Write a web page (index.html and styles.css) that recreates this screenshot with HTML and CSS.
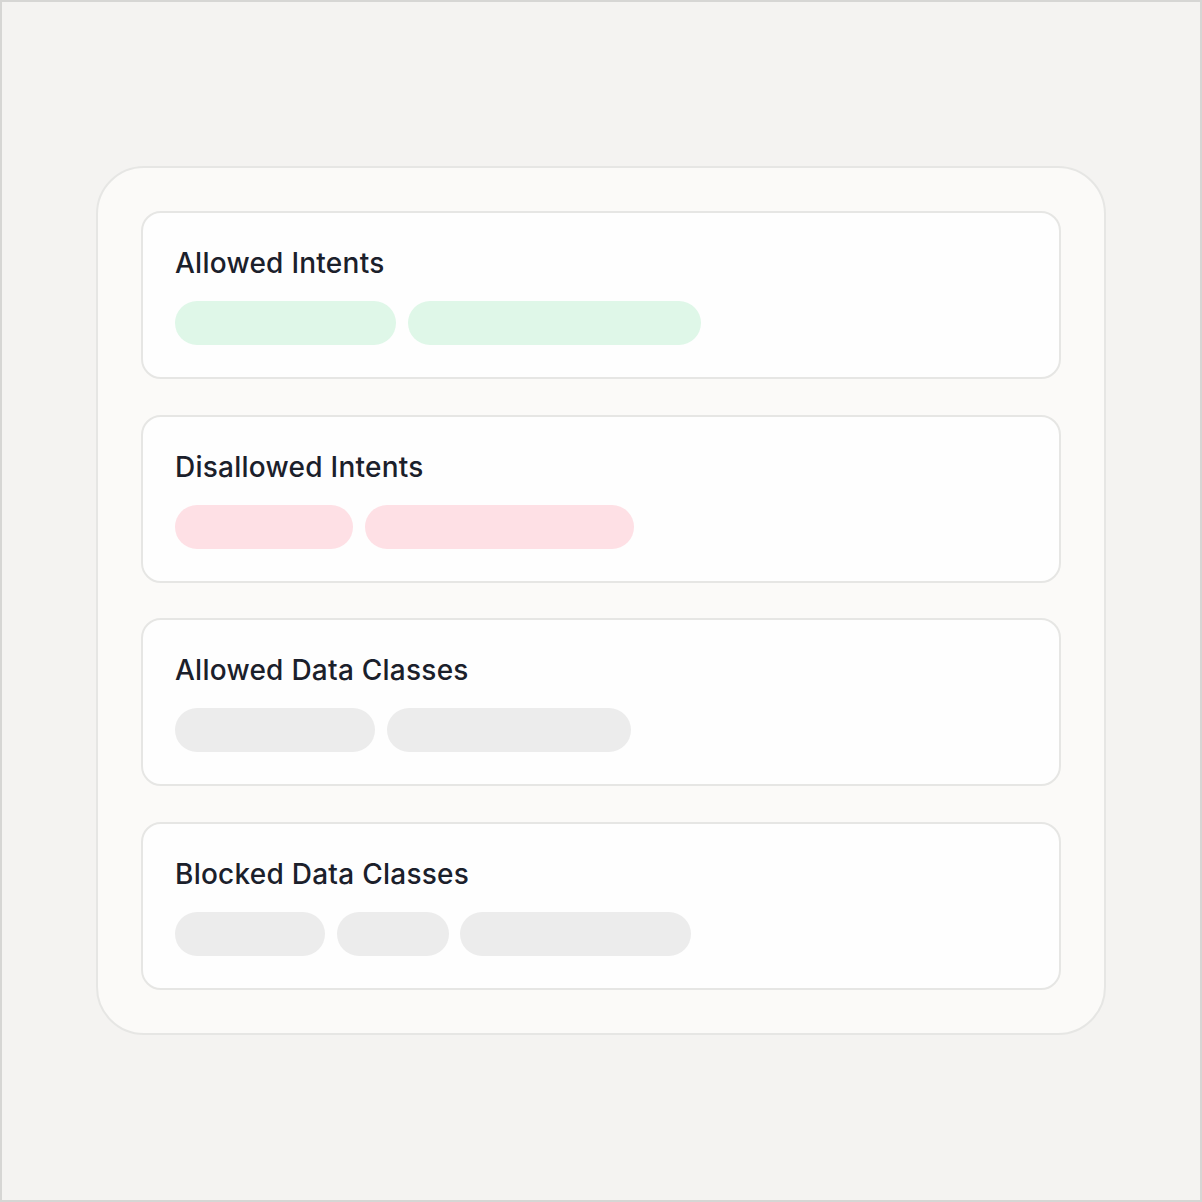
FILE: index.html
```html
<!DOCTYPE html>
<html>
<head>
<meta charset="utf-8">
<link rel="stylesheet" href="styles.css">
</head>
<body>
<div class="frame">
  <div class="panel">
    <div class="card">
      <div class="title">Allowed Intents</div>
      <div class="pills">
        <span class="pill green" style="width:221px"></span>
        <span class="pill green" style="width:293px"></span>
      </div>
    </div>
    <div class="card">
      <div class="title">Disallowed Intents</div>
      <div class="pills">
        <span class="pill pink" style="width:178px"></span>
        <span class="pill pink" style="width:269px"></span>
      </div>
    </div>
    <div class="card">
      <div class="title">Allowed Data Classes</div>
      <div class="pills">
        <span class="pill gray" style="width:200px"></span>
        <span class="pill gray" style="width:244px"></span>
      </div>
    </div>
    <div class="card">
      <div class="title">Blocked Data Classes</div>
      <div class="pills">
        <span class="pill gray" style="width:150px"></span>
        <span class="pill gray" style="width:112px"></span>
        <span class="pill gray" style="width:231px"></span>
      </div>
    </div>
  </div>
</div>
</body>
</html>
```

FILE: styles.css
```css
html, body {
  margin: 0;
  padding: 0;
}
body {
  width: 1202px;
  height: 1202px;
  font-family: Inter, "Noto Sans", sans-serif;
}
.frame {
  box-sizing: border-box;
  width: 1202px;
  height: 1202px;
  background: #f4f3f1;
  border: 2px solid #d6d6d4;
  padding-top: 164px;
  display: flex;
  flex-direction: column;
  align-items: center;
}
.panel {
  box-sizing: border-box;
  width: 1010px;
  background: #fbfaf8;
  border: 2px solid #e6e6e4;
  border-radius: 48px;
  padding: 43px;
  display: flex;
  flex-direction: column;
  gap: 35.5px;
}
.card {
  background: #fefefe;
  border: 2px solid #e6e6e4;
  border-radius: 20px;
  padding: 32px;
}
.title {
  font-size: 28px;
  line-height: 36px;
  font-weight: 500;
  letter-spacing: 0.25px;
  color: #1b202b;
  margin-bottom: 20px;
}
.pills {
  display: flex;
  gap: 11.5px;
}
.pill {
  display: block;
  height: 44px;
  border-radius: 22px;
}
.green { background: #dff7e8; }
.pink { background: #fee0e5; }
.gray { background: #ececec; }
```
